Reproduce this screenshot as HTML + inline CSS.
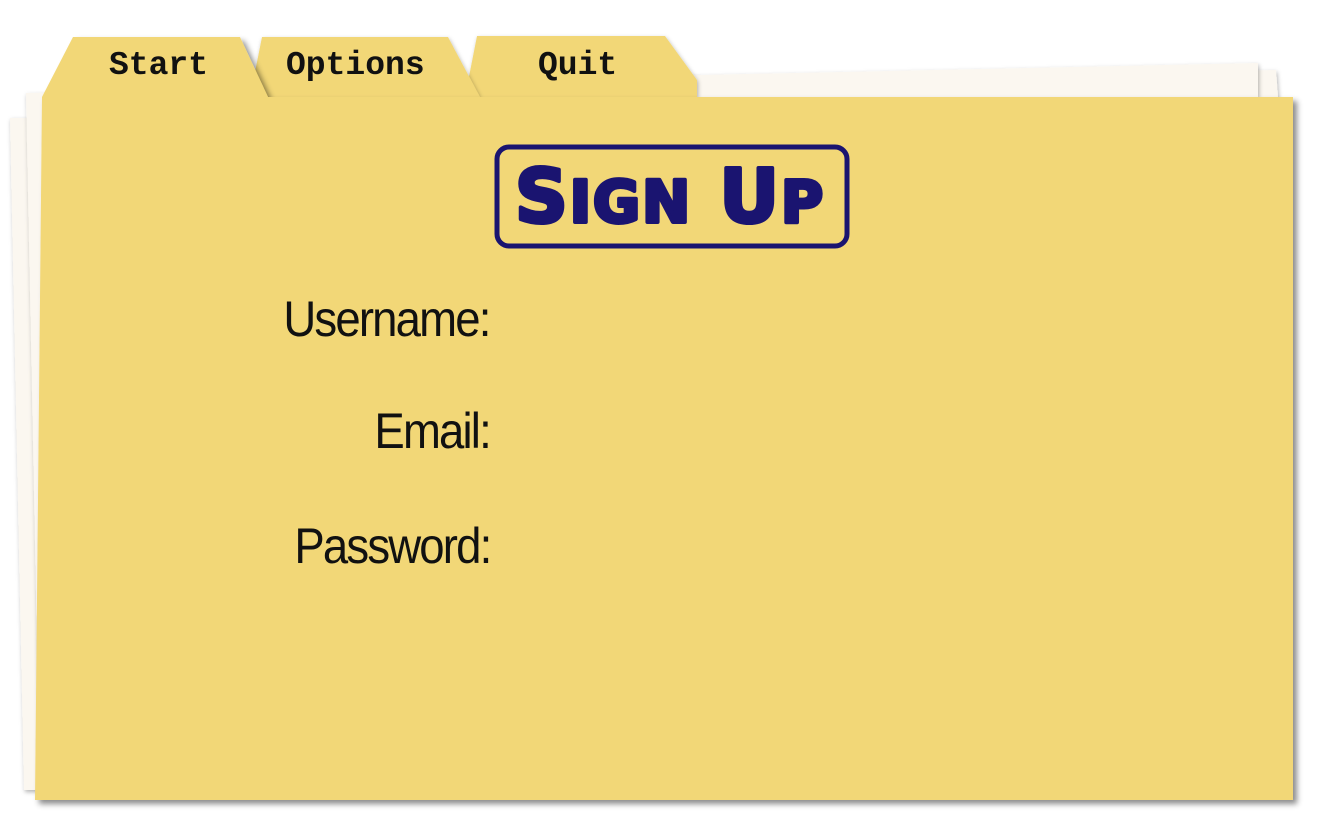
<!DOCTYPE html>
<html><head><meta charset="utf-8"><style>
html,body{margin:0;padding:0;background:#fff;width:1329px;height:836px;overflow:hidden;position:relative}
.lbl{position:absolute;right:839px;font-family:"Liberation Sans Narrow","Liberation Sans",sans-serif;font-size:50px;color:#111;letter-spacing:-2px;transform:scaleX(0.91);transform-origin:right center;font-weight:normal}
.tab{position:absolute;font-family:"Liberation Mono",monospace;font-weight:bold;font-size:33px;color:#111}
</style></head><body>
<svg width="1329" height="836" style="position:absolute;left:0;top:0">
<defs>
<filter id="sh" x="-5%" y="-5%" width="115%" height="115%"><feDropShadow dx="4" dy="4" stdDeviation="3" flood-color="#000" flood-opacity="0.45"/></filter>
<filter id="sh2"><feDropShadow dx="1" dy="2" stdDeviation="2" flood-color="#000" flood-opacity="0.3"/></filter>
</defs>
<polygon points="10,118 1250,118 1250,790 24,790" fill="#fbf7f0" filter="url(#sh2)"/>
<polygon points="26,93 1276,70 1278,97 1278,790 40,790" fill="#fbf7f0" filter="url(#sh2)"/>
<polygon points="470,80 1258,63 1258,97 470,97" fill="#fbf7f0" filter="url(#sh2)"/>
<polygon points="465,97 477,36 665,36 697,80 697,97" fill="#f2d777" filter="url(#sh2)"/>
<polygon points="250,97 262,37 448,37 480,97" fill="#f2d777" filter="url(#sh2)"/>
<polygon points="42,97 73,37 240,37 268,97 1293,97 1293,800 35,800" fill="#f2d777" filter="url(#sh)"/>
<rect x="497" y="147" width="350" height="99" rx="12" fill="none" stroke="#1a1470" stroke-width="5"/>
<text x="670" y="222" text-anchor="middle" font-family="DejaVu Sans" font-weight="bold" font-size="74" fill="#1a1470" stroke="#1a1470" stroke-width="4" stroke-linejoin="round" letter-spacing="2" textLength="310" lengthAdjust="spacingAndGlyphs">S<tspan font-size="58">IGN</tspan> U<tspan font-size="58">P</tspan></text>
</svg>
<div class="tab" style="left:109px;top:47px">Start</div>
<div class="tab" style="left:286px;top:47px">Options</div>
<div class="tab" style="left:538px;top:47px">Quit</div>
<div class="lbl" style="top:290px">Username:</div>
<div class="lbl" style="top:402px">Email:</div>
<div class="lbl" style="top:517px">Password:</div>
</body></html>
